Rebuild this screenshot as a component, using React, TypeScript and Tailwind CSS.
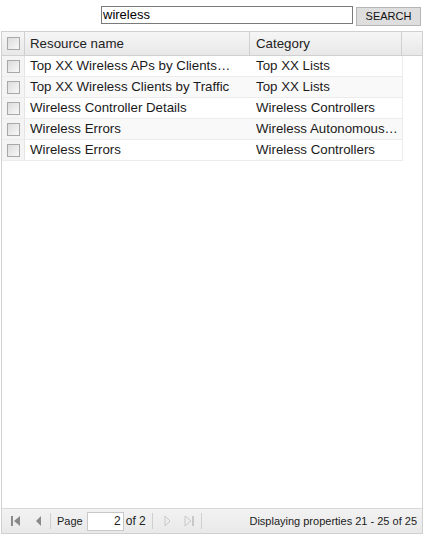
import React from 'react';

const rows = [
  { name: 'Top XX Wireless APs by Clients…', category: 'Top XX Lists' },
  { name: 'Top XX Wireless Clients by Traffic', category: 'Top XX Lists' },
  { name: 'Wireless Controller Details', category: 'Wireless Controllers' },
  { name: 'Wireless Errors', category: 'Wireless Autonomous…' },
  { name: 'Wireless Errors', category: 'Wireless Controllers' },
];

const Check = () => (
  <span className="block w-[13px] h-[13px] border border-[#a8a8a8] bg-gradient-to-br from-[#dcdcdc] to-[#f8f8f8]" />
);

const Sep = () => <span className="w-px h-[16px] bg-[#cfcfcf] mx-[6px]" />;

export default function App() {
  return (
    <div className="w-[425px] h-[538px] bg-white flex flex-col font-['Liberation_Sans',Arial,sans-serif] text-[#222]">
      <div className="flex justify-end gap-[3px] pr-[4px] pt-[6px] h-[31px] items-start">
        <input
          readOnly
          value="wireless"
          className="w-[252px] h-[18px] border border-[#7a7a7a] px-[1px] text-[13px] text-black outline-none"
        />
        <button className="w-[65px] h-[19px] mt-[1px] border border-[#b5b5b5] bg-[#dedede] text-[11px] text-[#111]">
          SEARCH
        </button>
      </div>
      <div className="mx-[1px] mr-[2px] flex-1 flex flex-col border border-[#d0d0d0] min-h-0">
        <div className="flex h-[24px] bg-gradient-to-b from-[#f6f6f6] to-[#e8e8e8] border-b border-[#d0d0d0] text-[13.3px] text-[#222]">
          <div className="w-[23px] flex items-center justify-center border-r border-[#d0d0d0] pl-[1px]">
            <Check />
          </div>
          <div className="w-[225px] flex items-center pl-[5px] border-r border-[#d0d0d0]">Resource name</div>
          <div className="w-[152px] flex items-center pl-[6px] border-r border-[#d0d0d0]">Category</div>
          <div className="flex-1" />
        </div>
        <div className="flex-1">
          {rows.map((r, i) => (
            <div
              key={i}
              className={`flex w-[401px] h-[21px] border-b border-r border-[#ececec] text-[13.3px] text-[#1a1a1a] ${
                i % 2 === 1 ? 'bg-[#f9f9f9]' : 'bg-white'
              }`}
            >
              <div className="w-[23px] flex items-center justify-center bg-[#f4f4f4] border-r border-[#e4e4e4] pl-[1px]">
                <Check />
              </div>
              <div className="w-[225px] flex items-center pl-[5px] whitespace-nowrap overflow-hidden">{r.name}</div>
              <div className="w-[152px] flex items-center pl-[6px] whitespace-nowrap overflow-hidden">{r.category}</div>
            </div>
          ))}
        </div>
        <div className="h-[25px] flex items-center bg-gradient-to-b from-[#f2f2f2] to-[#e9e9e9] border-t border-[#d8d8d8] pl-[8px] pr-[5px] text-[11px] text-[#222]">
          <svg width="12" height="12" viewBox="0 0 12 12">
            <rect x="1" y="1" width="2" height="10" fill="#8a8a8a" />
            <path d="M10 1 L4 6 L10 11 Z" fill="#8a8a8a" />
          </svg>
          <svg width="10" height="12" viewBox="0 0 10 12" className="ml-[12px]">
            <path d="M7 1 L2 6 L7 11 Z" fill="#8a8a8a" />
          </svg>
          <Sep />
          <span>Page</span>
          <input
            readOnly
            value="2"
            className="ml-[4px] w-[37px] h-[19px] border border-[#c8c8c8] bg-white text-right pr-[2px] text-[12px] outline-none"
          />
          <span className="ml-[2px] text-[12px]">of 2</span>
          <Sep />
          <svg width="10" height="12" viewBox="0 0 10 12" className="ml-[3px]">
            <path d="M3 1 L8 6 L3 11 Z" fill="none" stroke="#c8c8c8" />
          </svg>
          <svg width="12" height="12" viewBox="0 0 12 12" className="ml-[11px]">
            <path d="M2 1 L8 6 L2 11 Z" fill="none" stroke="#c8c8c8" />
            <rect x="9" y="1" width="2" height="10" fill="#c8c8c8" />
          </svg>
          <Sep />
          <span className="ml-auto">Displaying properties 21 - 25 of 25</span>
        </div>
      </div>
      <div className="h-[4px]" />
    </div>
  );
}
